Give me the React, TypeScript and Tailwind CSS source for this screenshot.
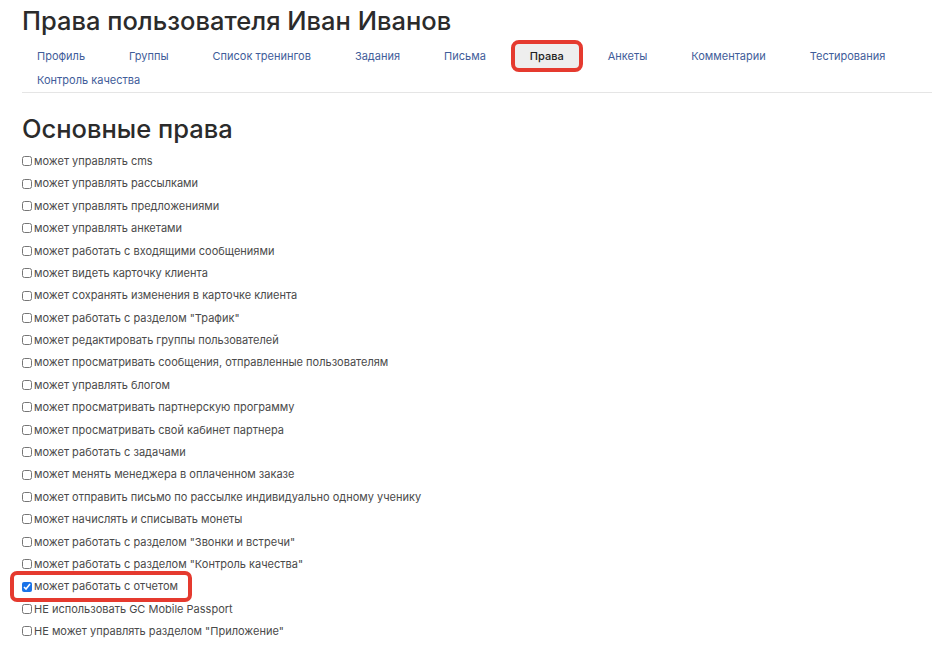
import React from 'react';

const tabs = [
  'Профиль',
  'Группы',
  'Список тренингов',
  'Задания',
  'Письма',
  'Права',
  'Анкеты',
  'Комментарии',
  'Тестирования',
  'Контроль качества',
];

const rights = [
  'может управлять cms',
  'может управлять рассылками',
  'может управлять предложениями',
  'может управлять анкетами',
  'может работать с входящими сообщениями',
  'может видеть карточку клиента',
  'может сохранять изменения в карточке клиента',
  'может работать с разделом "Трафик"',
  'может редактировать группы пользователей',
  'может просматривать сообщения, отправленные пользователям',
  'может управлять блогом',
  'может просматривать партнерскую программу',
  'может просматривать свой кабинет партнера',
  'может работать с задачами',
  'может менять менеджера в оплаченном заказе',
  'может отправить письмо по рассылке индивидуально одному ученику',
  'может начислять и списывать монеты',
  'может работать с разделом "Звонки и встречи"',
  'может работать с разделом "Контроль качества"',
  'может работать с отчетом',
  'НЕ использовать GC Mobile Passport',
  'НЕ может управлять разделом "Приложение"',
];

export default function App() {
  return (
    <div className="min-h-[646px] bg-white pl-[22px] pr-[19px] font-['Inter','Liberation_Sans',sans-serif]">
      <h1 className="mt-[6px] text-[25.5px] leading-[30px] font-medium text-[#2b2b2b]">
        Права пользователя Иван Иванов
      </h1>

      <ul className="-ml-[7px] mt-[8px] flex flex-wrap">
        {tabs.map((t) => {
          const active = t === 'Права';
          return (
            <li key={t} className="px-[7px]">
              <span
                className={
                  active
                    ? 'block h-[24px] rounded-[4px] bg-[#eeeeee] px-[15px] text-[11px] leading-[24px] font-medium text-[#222] outline-4 outline-[#e53a2f]'
                    : 'block h-[24px] px-[15px] text-[11px] leading-[24px] text-[#3f5d9a]'
                }
              >
                {t}
              </span>
            </li>
          );
        })}
      </ul>
      <div className="border-b border-[#e5e5e5]" />

      <h2 className="mt-[20px] text-[25.5px] leading-[32px] font-medium text-[#2b2b2b]">Основные права</h2>

      <div className="mt-[5px]">
        {rights.map((r) => {
          const checked = r === 'может работать с отчетом';
          return (
            <div key={r} className="relative flex h-[22.4px] items-center">
              {checked && (
                <div className="pointer-events-none absolute -left-[12px] top-[-4px] h-[31px] w-[182px] rounded-[7px] border-4 border-[#e53a2f]" />
              )}
              <input
                type="checkbox"
                defaultChecked={checked}
                className="m-0 mr-[2px] h-[10px] w-[10px] accent-[#1a73e8]"
              />
              <span className="text-[11px] text-[#4a4a4a]">{r}</span>
            </div>
          );
        })}
      </div>
    </div>
  );
}
